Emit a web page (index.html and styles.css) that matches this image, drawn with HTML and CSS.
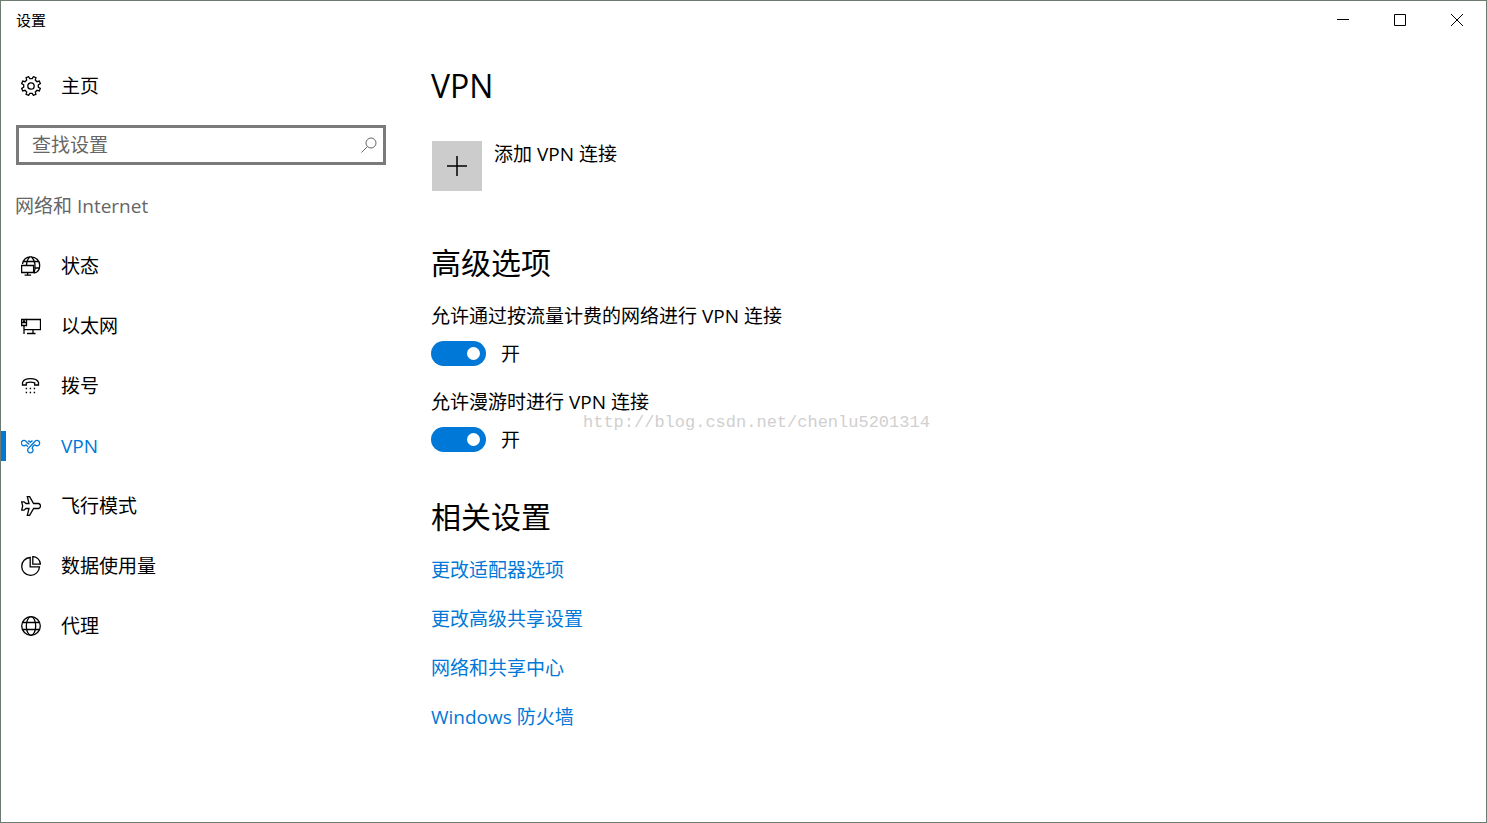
FILE: index.html
```html
<!DOCTYPE html>
<html lang="zh-CN">
<head>
    <meta charset="UTF-8">
    <meta name="viewport" content="width=device-width, initial-scale=1.0">
    <title>设置</title>
    <link rel="stylesheet" href="styles.css">
</head>
<body>
    <div class="window">
        <header class="titlebar">
            <span class="titlebar-text">设置</span>
            <div class="window-buttons">
                <button class="window-button" aria-label="最小化">
                    <svg width="12" height="12" viewBox="0 0 12 12"><path d="M0 5.5h12"/></svg>
                </button>
                <button class="window-button" aria-label="最大化">
                    <svg width="12" height="12" viewBox="0 0 12 12"><path d="M.5.5h11v11H.5z"/></svg>
                </button>
                <button class="window-button" aria-label="关闭">
                    <svg width="12" height="12" viewBox="0 0 12 12"><path d="M0 0l12 12M12 0L0 12"/></svg>
                </button>
            </div>
        </header>

        <div class="content">
            <aside class="sidebar">
                <a class="nav-item" href="#home">
                    <svg class="icon" viewBox="0 0 20 20">
                        <path d="M17.3 11.2l2 1.2-1 2.5-2.3-.6-1.7 1.7.6 2.3-2.5 1-1.2-2H8.8l-1.2 2-2.5-1 .6-2.3L4 14.3l-2.3.6-1-2.5 2-1.2V8.8l-2-1.2 1-2.5 2.3.6L5.7 4l-.6-2.3 2.5-1 1.2 2h2.4l1.2-2 2.5 1-.6 2.3L16 5.7l2.3-.6 1 2.5-2 1.2z"/>
                        <circle cx="10" cy="10" r="3.2"/>
                    </svg>
                    <span>主页</span>
                </a>

                <form class="search">
                    <input class="search-input" type="text" placeholder="查找设置" aria-label="查找设置">
                    <button class="search-button" type="button" aria-label="搜索">
                        <svg width="16" height="16" viewBox="0 0 16 16"><circle cx="10" cy="6" r="5"/><path d="M6.4 9.6L.5 15.5"/></svg>
                    </button>
                </form>

                <h2 class="category">网络和 Internet</h2>

                <nav>
                    <a class="nav-item" href="#status">
                        <svg class="icon" viewBox="0 0 20 20">
                            <path d="M1.5 8C2.3 3.500 5.5.8 9.700.8c5.200 0 9 3.700 9 8.400 0 4.200-2.300 7.300-5.700 7.900M9.200.8C6.700 2.600 5.700 5 5.500 9M10.200.8c4.300 3.500 4.700 10.500 2.800 16.300M2.600 5.500h15M13.500 12h4.700"/>
                            <path class="backed" d="M.6 9.500h12v7H.6z"/>
                            <path d="M6.600 16.500v2.500M3.600 19.200h6.500"/>
                        </svg>
                        <span>状态</span>
                    </a>
                    <a class="nav-item" href="#ethernet">
                        <svg class="icon" viewBox="0 0 20 20">
                            <path d="M5 3.500h14.500v10.100H3.500M12 13.600v3.900M6 17.500h8.500M3 9.500v8.500"/>
                            <path class="backed" d="M.6 3.500h4.900v6H.6z"/>
                            <path d="M.6 6.500h4.900M2 5h2"/>
                        </svg>
                        <span>以太网</span>
                    </a>
                    <a class="nav-item" href="#dialup">
                        <svg class="icon" viewBox="0 0 20 20">
                            <path d="M1.500 9V6.500C2.500 4 5.500 2.700 9.500 2.700s7 1.300 8 3.800V9h-3.800V6.800c-2.800-.9-5.600-.9-8.400 0V9z"/>
                            <path class="dots" d="M4.700 12.500h10M4.700 16.500h10"/>
                        </svg>
                        <span>拨号</span>
                    </a>
                    <a class="nav-item selected" href="#vpn" aria-current="page">
                        <svg class="icon" viewBox="0 0 20 20">
                            <path d="M5.200 8.700A2.700 2.700 0 1 1 5 5.200c1.400 1.300 2 2.900 3.500 2.900M13.800 8.700A2.700 2.700 0 1 0 14 5.200L7.500 12.200A2.700 2.700 0 1 0 11.200 12.200c.3-1.600 1.200-2.800 2.600-3.500M7.300 4.600l2.100 1.500 2.100-1.500M5.200 8.700l1.600 2.100"/>
                        </svg>
                        <span>VPN</span>
                    </a>
                    <a class="nav-item" href="#airplane">
                        <svg class="icon" viewBox="0 0 20 20">
                            <path d="M6.300.6h2.300l4 6.900h5c2.500.7 2.500 4.300 0 5h-5l-4 6.900H6.300l1.700-6.900H5l-2 1.700H.7l1-4.200-1-4.200H3l2 1.700h3z"/>
                        </svg>
                        <span>飞行模式</span>
                    </a>
                    <a class="nav-item" href="#data-usage">
                        <svg class="icon" viewBox="0 0 20 20">
                            <path d="M9.200 1.500A8.900 8.900 0 1 0 18.500 10.800H9.200z"/>
                            <path d="M11.800.6v7.600h7.600A7.800 7.800 0 0 0 11.800.6z"/>
                        </svg>
                        <span>数据使用量</span>
                    </a>
                    <a class="nav-item" href="#proxy">
                        <svg class="icon" viewBox="0 0 20 20">
                            <circle cx="10" cy="10" r="9.3"/>
                            <ellipse cx="10" cy="10" rx="4.7" ry="9.3"/>
                            <path d="M1.500 6.500h17M1.500 13.500h17"/>
                        </svg>
                        <span>代理</span>
                    </a>
                </nav>
            </aside>

            <main class="main">
                <h1 class="heading page-title">VPN</h1>
                <button class="add-button">
                    <span class="add-icon">
                        <svg width="20" height="20" viewBox="0 0 20 20"><path d="M10 0v20M0 10h20"/></svg>
                    </span>
                    <span>添加 VPN 连接</span>
                </button>

                <section class="advanced">
                    <h2 class="heading">高级选项</h2>
                    <div class="setting">
                        <label for="metered">允许通过按流量计费的网络进行 VPN 连接</label>
                        <div class="toggle-row">
                            <input class="toggle" type="checkbox" id="metered" checked>
                            <span>开</span>
                        </div>
                    </div>
                    <div class="setting">
                        <label for="roaming">允许漫游时进行 VPN 连接</label>
                        <div class="toggle-row">
                            <input class="toggle" type="checkbox" id="roaming" checked>
                            <span>开</span>
                        </div>
                        <span class="watermark">http://blog.csdn.net/chenlu5201314</span>
                    </div>
                </section>

                <section class="related">
                    <h2 class="heading">相关设置</h2>
                    <div class="links">
                        <a href="#adapter">更改适配器选项</a>
                        <a href="#sharing">更改高级共享设置</a>
                        <a href="#center">网络和共享中心</a>
                        <a href="#firewall">Windows 防火墙</a>
                    </div>
                </section>
            </main>
        </div>
    </div>
</body>
</html>
```

FILE: styles.css
```css
* {
    box-sizing: border-box;
}
body {
    margin: 0;
    background-color: #fff;
    color: #000;
    font-family: "Open Sans", "Noto Sans CJK SC", sans-serif;
    font-size: 19px;
    line-height: 26px;
}
button, input {
    font: inherit;
    color: inherit;
    border: none;
    background: none;
    padding: 0;
    margin: 0;
}
a {
    color: #0078d7;
    text-decoration: none;
}
svg {
    display: block;
    fill: none;
    stroke: currentColor;
}
.window {
    min-height: 100vh;
    border: 1px solid #6e7b70;
}

/* Title bar */
.titlebar {
    display: flex;
    justify-content: space-between;
    height: 38px;
    padding: 0 1px 0 15px;
}
.titlebar-text {
    font-size: 15px;
    line-height: 38px;
}
.window-buttons {
    display: flex;
}
.window-button {
    display: flex;
    align-items: center;
    justify-content: center;
    width: 57px;
}

/* Sidebar */
.content {
    display: flex;
    padding-top: 17px;
}
.sidebar {
    flex: none;
    width: 400px;
}
.nav-item {
    display: flex;
    align-items: center;
    gap: 20px;
    height: 60px;
    padding-left: 20px;
    color: #000;
}
.icon {
    width: 20px;
    height: 20px;
    stroke-width: 1.3;
}
.backed {
    fill: #fff;
}
.dots {
    stroke-width: 1.4;
    stroke-dasharray: 1.4 2.6;
}
.selected {
    color: #0078d7;
    background: linear-gradient(#0078d7, #0078d7) left center / 5px 30px no-repeat;
}
.search {
    display: flex;
    align-items: center;
    height: 40px;
    margin: 9px 15px 28px;
    padding: 0 6px 0 13px;
    border: 3px solid #7a7a7a;
    color: #666;
}
.search-input {
    flex: 1;
    min-width: 0;
    outline: none;
}
.search-input::placeholder {
    color: #666;
    opacity: 1;
}
.category {
    margin: 0 0 16px;
    padding-left: 14px;
    font-size: 19px;
    line-height: 27px;
    font-weight: normal;
    color: #666;
}

/* Main column */
.main {
    flex: 1;
    padding: 10px 30px 30px;
}
.heading {
    margin: 0 0 20px;
    font-size: 30px;
    line-height: 40px;
    font-weight: normal;
}
.page-title {
    font-size: 32px;
}
.add-button {
    display: flex;
    gap: 12px;
    margin: 35px 0 0 1px;
}
.add-icon {
    display: flex;
    align-items: center;
    justify-content: center;
    width: 50px;
    height: 50px;
    background-color: #ccc;
}
.add-icon svg {
    stroke-width: 1.5;
}
.advanced {
    margin-top: 52px;
}
.related {
    margin-top: 45px;
}
.setting {
    position: relative;
    margin-bottom: 23px;
}
.setting label {
    display: block;
    margin-bottom: 12px;
}
.toggle-row {
    display: flex;
    align-items: center;
    gap: 15px;
    height: 25px;
}
.toggle {
    appearance: none;
    width: 55px;
    height: 25px;
    padding: 6px;
    border-radius: 13px;
    background-color: #7a7a7a;
    cursor: pointer;
}
.toggle::before {
    content: "";
    display: block;
    width: 13px;
    height: 13px;
    border-radius: 50%;
    background-color: #fff;
}
.toggle:checked {
    background-color: #0078d7;
}
.toggle:checked::before {
    margin-left: auto;
}
.watermark {
    position: absolute;
    left: 152px;
    top: 21px;
    font-family: "Liberation Mono", monospace;
    font-size: 17px;
    color: #d0d0d0;
}
.links {
    display: flex;
    flex-direction: column;
    align-items: flex-start;
    gap: 23px;
}
```
